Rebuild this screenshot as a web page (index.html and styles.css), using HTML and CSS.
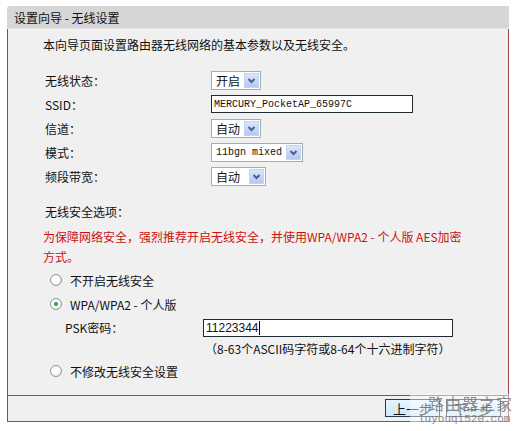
FILE: index.html
```html
<!DOCTYPE html>
<html lang="zh-CN">
<head>
  <meta charset="UTF-8">
  <title>设置向导 - 无线设置</title>
  <link rel="stylesheet" href="styles.css">
</head>
<body>
  <div class="wizard">
    <div class="wizard-title">设置向导 - 无线设置</div>

    <div class="wizard-body">
      <p class="intro">本向导页面设置路由器无线网络的基本参数以及无线安全。</p>

      <div class="field-list">
        <div class="field">
          <span class="field-label">无线状态：</span>
          <span class="select select-sm"><span class="select-text">开启</span><span class="select-btn"></span></span>
        </div>
        <div class="field">
          <span class="field-label">SSID：</span>
          <span class="text-input ssid">MERCURY_PocketAP_65997C</span>
        </div>
        <div class="field">
          <span class="field-label">信道：</span>
          <span class="select select-sm"><span class="select-text">自动</span><span class="select-btn"></span></span>
        </div>
        <div class="field">
          <span class="field-label">模式：</span>
          <span class="select select-lg"><span class="select-text mono">11bgn mixed</span><span class="select-btn"></span></span>
        </div>
        <div class="field">
          <span class="field-label">频段带宽：</span>
          <span class="select select-md"><span class="select-text">自动</span><span class="select-btn"></span></span>
        </div>
      </div>

      <div class="section-title">无线安全选项：</div>
      <p class="warning">为保障网络安全，强烈推荐开启无线安全，并使用WPA/WPA2 - 个人版 AES加密方式。</p>

      <div class="radio-group">
        <div class="radio-row"><span class="radio"></span>不开启无线安全</div>
        <div class="radio-row"><span class="radio checked"></span>WPA/WPA2 - 个人版</div>
        <div class="psk-row">
          <span class="psk-label">PSK密码：</span>
          <span class="text-input psk">11223344<span class="caret"></span></span>
        </div>
        <div class="hint">（8-63个ASCII码字符或8-64个十六进制字符）</div>
        <div class="radio-row"><span class="radio"></span>不修改无线安全设置</div>
      </div>
    </div>

    <div class="wizard-footer">
      <button class="btn">上一步</button>
      <button class="btn">下一步</button>
    </div>
  </div>

  <div class="watermark">
    <div class="watermark-cn">路由器之家</div>
    <div class="watermark-en">luyouqi520.com</div>
  </div>
</body>
</html>
```

FILE: styles.css
```css
* {
  box-sizing: border-box;
  margin: 0;
  padding: 0;
}

:root {
  --frame: #a04550;
  --panel: #f0f0f0;
  --title-bg: #d6d6d6;
  --field-border: #a5acb2;
  --red-text: #cc1010;
  --font-cn: "Noto Sans CJK SC", "Noto Sans", sans-serif;
  --font-mono: "Liberation Mono", "DejaVu Sans Mono", monospace;
}

body {
  font-family: var(--font-cn);
  font-size: 12px;
  color: #111;
  background: #fff;
  padding: 6px 0 0 7px;
}

/* Wizard frame */
.wizard {
  width: 502px;
}

.wizard-title {
  height: 23px;
  line-height: 23px;
  padding-left: 7px;
  background: var(--title-bg);
  border-top-left-radius: 3px;
  border-bottom: 1px solid #e2e2e2;
  color: #111;
}

.wizard-body {
  background: var(--panel);
  border-left: 1px solid var(--frame);
  border-right: 1px solid var(--frame);
  padding: 8px 0 12px 35px;
}

.intro {
  line-height: 16px;
}

.field-list {
  margin-top: 15px;
  padding-left: 2px;
}

.field {
  display: flex;
  align-items: center;
  height: 24px;
}

.field-label {
  width: 166px;
}

/* Fake XP style select boxes */
.select {
  display: flex;
  align-items: center;
  justify-content: space-between;
  height: 19px;
  padding: 0 1px 0 4px;
  background: #fff;
  border: 1px solid var(--field-border);
}

.select-sm { width: 50px; }
.select-md { width: 55px; }
.select-lg { width: 92px; }

.select-text {
  line-height: 17px;
}

.select-text.mono {
  font-family: var(--font-mono);
  font-size: 10px;
}

.select-btn {
  width: 15px;
  height: 15px;
  border: 1px solid #c4d4f6;
  background:
    url("data:image/svg+xml;utf8,<svg xmlns='http://www.w3.org/2000/svg' width='13' height='13'><path d='M3.5 5 L6.5 8 L9.5 5' fill='none' stroke='%234d6185' stroke-width='2'/></svg>") center / 13px 13px no-repeat,
    linear-gradient(#dbe6fd, #b4c8f4);
}

.text-input {
  display: flex;
  align-items: center;
  height: 18px;
  padding-left: 2px;
  background: #fff;
  border: 1px solid #1e2b33;
}

.ssid {
  width: 202px;
  font-family: var(--font-mono);
  font-size: 10px;
}

/* Security section */
.section-title {
  margin-top: 16px;
  padding-left: 2px;
  line-height: 16px;
}

.warning {
  width: 430px;
  margin-top: 7px;
  line-height: 20px;
  color: var(--red-text);
}

.radio-group {
  margin-top: 1px;
}

.radio-row {
  display: flex;
  align-items: center;
  gap: 8px;
  height: 24px;
  padding-left: 7px;
}

.radio {
  width: 12px;
  height: 12px;
  border-radius: 50%;
  border: 1px solid #8e959c;
  background: radial-gradient(circle at 40% 40%, #fff 40%, #dcdcd6 100%);
  position: relative;
}

.radio.checked::after {
  content: "";
  position: absolute;
  left: 3px;
  top: 3px;
  width: 4px;
  height: 4px;
  border-radius: 50%;
  background: #2f9e2f;
}

.psk-row {
  display: flex;
  align-items: center;
  height: 23px;
  padding-left: 22px;
}

.psk-label {
  width: 138px;
}

.psk {
  width: 250px;
  font-family: "Liberation Sans", sans-serif;
  font-size: 12px;
}

.caret {
  width: 1px;
  height: 14px;
  background: #000;
}

.hint {
  padding-left: 162px;
  line-height: 20px;
}

/* Footer with buttons */
.wizard-footer {
  display: flex;
  justify-content: flex-end;
  gap: 6px;
  height: 27px;
  padding: 3px 7px 0 0;
  background: var(--panel);
  border: 1px solid var(--frame);
}

.btn {
  width: 55px;
  height: 18px;
  font-family: var(--font-cn);
  font-size: 13px;
  line-height: 15px;
  color: #111;
  background: linear-gradient(#e6f5fd, #cde9f8);
  border: 1px solid #26384d;
}

/* Site watermark over the corner */
.watermark {
  position: absolute;
  left: 410px;
  top: 394px;
  width: 108px;
  padding: 1px 0 0 8px;
  white-space: nowrap;
  background: rgba(255, 255, 255, 0.45);
  color: rgba(110, 110, 110, 0.8);
  line-height: 1;
}

.watermark-cn {
  font-family: "Noto Sans CJK SC", serif;
  font-size: 16px;
  letter-spacing: 1px;
  padding-left: 10px;
}

.watermark-en {
  font-family: var(--font-mono);
  font-size: 11px;
  margin-top: 3px;
}
```
